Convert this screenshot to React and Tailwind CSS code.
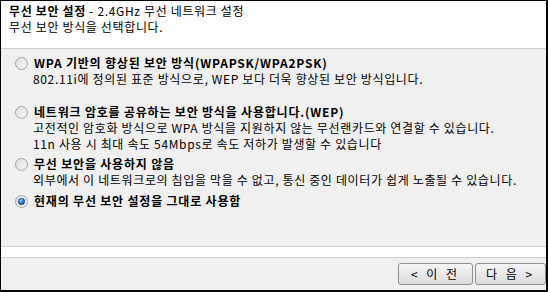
import { useState } from "react";

const font = { fontFamily: '"Noto Sans CJK KR", "Noto Sans", sans-serif' };

const Radio = ({ checked }) => (
  <svg width="13" height="13" viewBox="0 0 13 13" className="shrink-0">
    <defs>
      <linearGradient id="rg" x1="0" y1="0" x2="1" y2="1">
        <stop offset="0" stopColor="#d8d8d8" />
        <stop offset="1" stopColor="#ffffff" />
      </linearGradient>
      <radialGradient id="dot" cx="0.4" cy="0.35" r="0.7">
        <stop offset="0" stopColor="#9fd3ff" />
        <stop offset="0.5" stopColor="#2a82e0" />
        <stop offset="1" stopColor="#0d3f8a" />
      </radialGradient>
    </defs>
    <circle cx="6.5" cy="6.5" r="6" fill="url(#rg)" stroke="#a4a4a4" strokeWidth="1" />
    <circle cx="6.5" cy="6.5" r="4.5" fill="none" stroke="#e8e8e8" strokeWidth="1" />
    {checked && <circle cx="6.5" cy="6.5" r="3.2" fill="url(#dot)" stroke="#1d3e66" strokeWidth="0.6" />}
  </svg>
);

const Option = ({ label, desc = [], checked, onSelect, className = "" }) => (
  <div className={className}>
    <label className="flex items-center gap-[6px] h-[16px] cursor-pointer" onClick={onSelect}>
      <Radio checked={checked} />
      <span className="font-bold tracking-[0.8px]">{label}</span>
    </label>
    {desc.map((d) => (
      <div key={d} className="pl-[18px] h-[16px] whitespace-nowrap">{d}</div>
    ))}
  </div>
);

export default function App() {
  const [sel, setSel] = useState(3);

  return (
    <div
      className="w-[548px] h-[292px] border-t border-l border-r-2 border-b-2 border-black bg-[#f0f0f0] flex flex-col text-[12px] tracking-[0.65px] leading-[16px] text-black overflow-hidden"
      style={font}
    >
      {/* 상단 제목 */}
      <div className="h-[48px] shrink-0 bg-white border-b border-[#cfcfcf] px-[8px] pt-[2px] leading-[16px]">
        <div>
          <span className="font-bold">무선 보안 설정</span> - 2.4GHz 무선 네트워크 설정
        </div>
        <div>무선 보안 방식을 선택합니다.</div>
      </div>

      {/* 보안 방식 선택 */}
      <div className="h-[197px] shrink-0 pl-[14px] pt-[6px]">
        <Option
          checked={sel === 0}
          onSelect={() => setSel(0)}
          label="WPA 기반의 향상된 보안 방식(WPAPSK/WPA2PSK)"
          desc={["802.11i에 정의된 표준 방식으로, WEP 보다 더욱 향상된 보안 방식입니다."]}
        />
        <Option
          className="mt-[17px]"
          checked={sel === 1}
          onSelect={() => setSel(1)}
          label="네트워크 암호를 공유하는 보안 방식을 사용합니다.(WEP)"
          desc={[
            "고전적인 암호화 방식으로 WPA 방식을 지원하지 않는 무선랜카드와 연결할 수 있습니다.",
            "11n 사용 시 최대 속도 54Mbps로 속도 저하가 발생할 수 있습니다",
          ]}
        />
        <Option
          className="mt-[4px]"
          checked={sel === 2}
          onSelect={() => setSel(2)}
          label="무선 보안을 사용하지 않음"
          desc={["외부에서 이 네트워크로의 침입을 막을 수 없고, 통신 중인 데이터가 쉽게 노출될 수 있습니다."]}
        />
        <Option
          className="mt-[5px]"
          checked={sel === 3}
          onSelect={() => setSel(3)}
          label="현재의 무선 보안 설정을 그대로 사용함"
        />
      </div>

      <div className="h-[12px] shrink-0 bg-white border-y border-[#cdcdcd]" />

      {/* 하단 버튼 */}
      <div className="flex-1 flex justify-end items-start gap-[2px] pt-[5px]">
        <button className="w-[75px] h-[22px] rounded-[3px] border border-[#8e8f8f] bg-gradient-to-b from-[#f6f6f6] to-[#dcdcdc] text-[12px] leading-[20px] tracking-[3px]">
          &lt; 이 전
        </button>
        <button className="w-[71px] h-[22px] rounded-[3px] border border-[#8e8f8f] bg-gradient-to-b from-[#f6f6f6] to-[#dcdcdc] text-[12px] leading-[20px] tracking-[3px]">
          다 음 &gt;
        </button>
      </div>
    </div>
  );
}
